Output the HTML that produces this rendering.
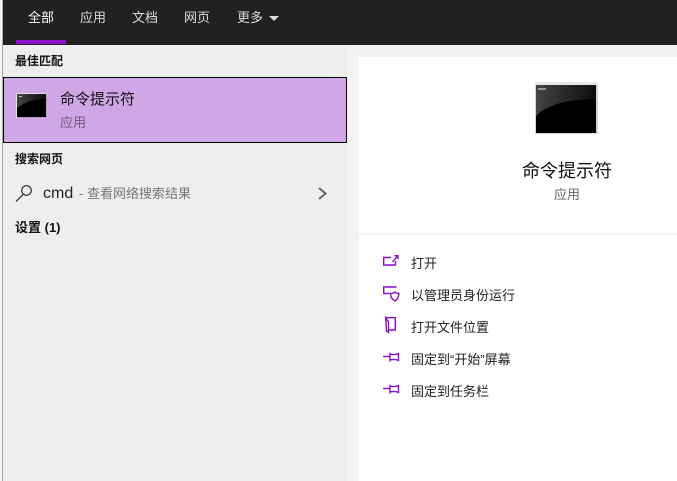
<!DOCTYPE html>
<html lang="zh-CN">
<head>
<meta charset="utf-8">
<style>
html,body{margin:0;padding:0}
body{width:677px;height:481px;position:relative;overflow:hidden;background:#f3f3f3;font-family:"Liberation Sans","Noto Sans CJK SC",sans-serif;color:#000}
.a{position:absolute;white-space:nowrap}
.t{font-size:13px;line-height:18px}
.h{font-size:12px;line-height:16px;font-weight:bold;color:#111}
.tab{font-size:13px;line-height:18px;top:9px;color:#ddd}
svg{position:absolute;overflow:visible}
.ic{fill:none;stroke:#8a0fc9;stroke-width:1.4}
</style>
</head>
<body>
<div class="a" style="left:0;top:0;width:2px;height:481px;background:#f4f4f4"></div>
<div class="a" style="left:2px;top:0;width:1px;height:481px;background:#a8a8a8"></div>
<div class="a" style="left:3px;top:0;width:674px;height:45px;background:#212121"></div>
<div class="a" style="left:3px;top:45px;width:344px;height:436px;background:#eeeeee"></div>
<div class="a" style="left:359px;top:57px;width:318px;height:424px;background:#fff"></div>

<div class="a tab" style="left:28px;color:#fff">全部</div>
<div class="a tab" style="left:80px">应用</div>
<div class="a tab" style="left:132px">文档</div>
<div class="a tab" style="left:184px">网页</div>
<div class="a tab" style="left:237px">更多</div>
<div class="a" style="left:269px;top:16px;width:0;height:0;border-left:5.500px solid transparent;border-right:5.500px solid transparent;border-top:5.500px solid #ddd"></div>
<div class="a" style="left:16px;top:40px;width:50px;height:4px;background:#8a0fc9"></div>

<div class="a h" style="left:15px;top:53px">最佳匹配</div>
<div class="a" style="left:3px;top:77px;width:342px;height:64px;background:#cfa6e6;border:1px solid #000"></div>
<svg style="left:16px;top:93px" width="32" height="26" viewBox="0 0 32 26">
  <defs><linearGradient id="g1" x1="0" y1="0" x2="1" y2="0"><stop offset="0" stop-color="#444"/><stop offset="1" stop-color="#0c0c0c"/></linearGradient></defs>
  <rect x="0" y="0" width="31" height="25" fill="#b79cc8"/>
  <rect x="0" y="0" width="31" height="1" fill="#e6dcec"/>
  <rect x="0" y="0" width="1" height="25" fill="#e6dcec"/>
  <rect x="1" y="1" width="29" height="23" fill="#000"/>
  <path d="M1 1H30V6C19 6 8 9 1 15Z" fill="url(#g1)"/>
  <rect x="3" y="3" width="3" height="1" fill="#ccc"/>
</svg>
<div class="a" style="left:60px;top:90px;font-size:15px;line-height:20px;color:#111">命令提示符</div>
<div class="a t" style="left:60px;top:114px;color:#6b5a78">应用</div>

<div class="a h" style="left:15px;top:151px">搜索网页</div>
<svg style="left:15px;top:185px" width="18" height="18" viewBox="0 0 18 18">
  <circle cx="11.500" cy="5.500" r="4.800" fill="none" stroke="#222" stroke-width="1.100"/>
  <path d="M8 9.500L1 16.500" fill="none" stroke="#222" stroke-width="1.200"/>
</svg>
<div class="a" style="left:43px;top:185px;font-size:16px;line-height:18px;color:#222">cmd</div>
<div class="a t" style="left:79px;top:185px;color:#777">- 查看网络搜索结果</div>
<svg style="left:318px;top:187px" width="10" height="13" viewBox="0 0 10 13">
  <path d="M1 1L7.500 6.500L1 12" fill="none" stroke="#666" stroke-width="2"/>
</svg>
<div class="a h" style="left:15px;top:220px;font-size:13px">设置 (1)</div>

<svg style="left:535px;top:82px" width="64" height="53" viewBox="0 0 64 53">
  <defs><linearGradient id="g2" x1="0" y1="0" x2="1" y2="0"><stop offset="0" stop-color="#444"/><stop offset="1" stop-color="#0c0c0c"/></linearGradient></defs>
  <rect x="0" y="0" width="63" height="52" fill="#ccd6de"/>
  <rect x="0" y="0" width="63" height="3" fill="#e4e8ea"/>
  <rect x="1" y="3" width="60" height="48" fill="#000"/>
  <path d="M1 3H61V17C38 17 14 21 1 34Z" fill="url(#g2)"/>
  <rect x="3" y="6" width="8" height="2" fill="#999"/>
</svg>
<div class="a" style="left:522px;top:159px;font-size:18px;line-height:24px;color:#111">命令提示符</div>
<div class="a t" style="left:554px;top:186px;color:#666">应用</div>
<div class="a" style="left:359px;top:233px;width:318px;height:2px;background:#f2f2f2"></div>

<svg class="ic" style="left:383px;top:255px" width="16" height="14" viewBox="0 0 16 14">
  <path d="M8 2.500H.700V10H12.500V6"/><path d="M9.500 7L15 .700M11.500 .700H15V4"/>
</svg>
<div class="a t" style="left:411px;top:255px;color:#222">打开</div>

<svg class="ic" style="left:383px;top:286px" width="18" height="16" viewBox="0 0 18 16">
  <path d="M13.500 1H.700V7.500H6.500"/><path d="M7.500 7.500C9.500 7.500 11 7 12 6C13 7 14.500 7.500 15.800 7.500C15.800 11 14.500 13.500 12 15C9 13.500 7.500 11 7.500 7.500Z"/>
</svg>
<div class="a t" style="left:411px;top:287px;color:#222">以管理员身份运行</div>

<svg class="ic" style="left:385px;top:317px" width="13" height="17" viewBox="0 0 13 17">
  <path d="M.700 .700H10.300V13H3.500"/><path d="M.700 .700L3.500 5V15.500L1.500 14Z"/>
</svg>
<div class="a t" style="left:411px;top:319px;color:#222">打开文件位置</div>

<svg class="ic" style="left:383px;top:352px" width="17" height="11" viewBox="0 0 17 11">
  <path d="M0 4.500H7"/><path d="M7 .700V9.500M7 2C10 2.800 13 2.800 15.500 1.500V8.500C13 7.200 10 7.200 7 8"/>
</svg>
<div class="a t" style="left:411px;top:351px;color:#222">固定到“开始”屏幕</div>

<svg class="ic" style="left:383px;top:384px" width="17" height="11" viewBox="0 0 17 11">
  <path d="M0 4.500H7"/><path d="M7 .700V9.500M7 2C10 2.800 13 2.800 15.500 1.500V8.500C13 7.200 10 7.200 7 8"/>
</svg>
<div class="a t" style="left:411px;top:383px;color:#222">固定到任务栏</div>
</body>
</html>
